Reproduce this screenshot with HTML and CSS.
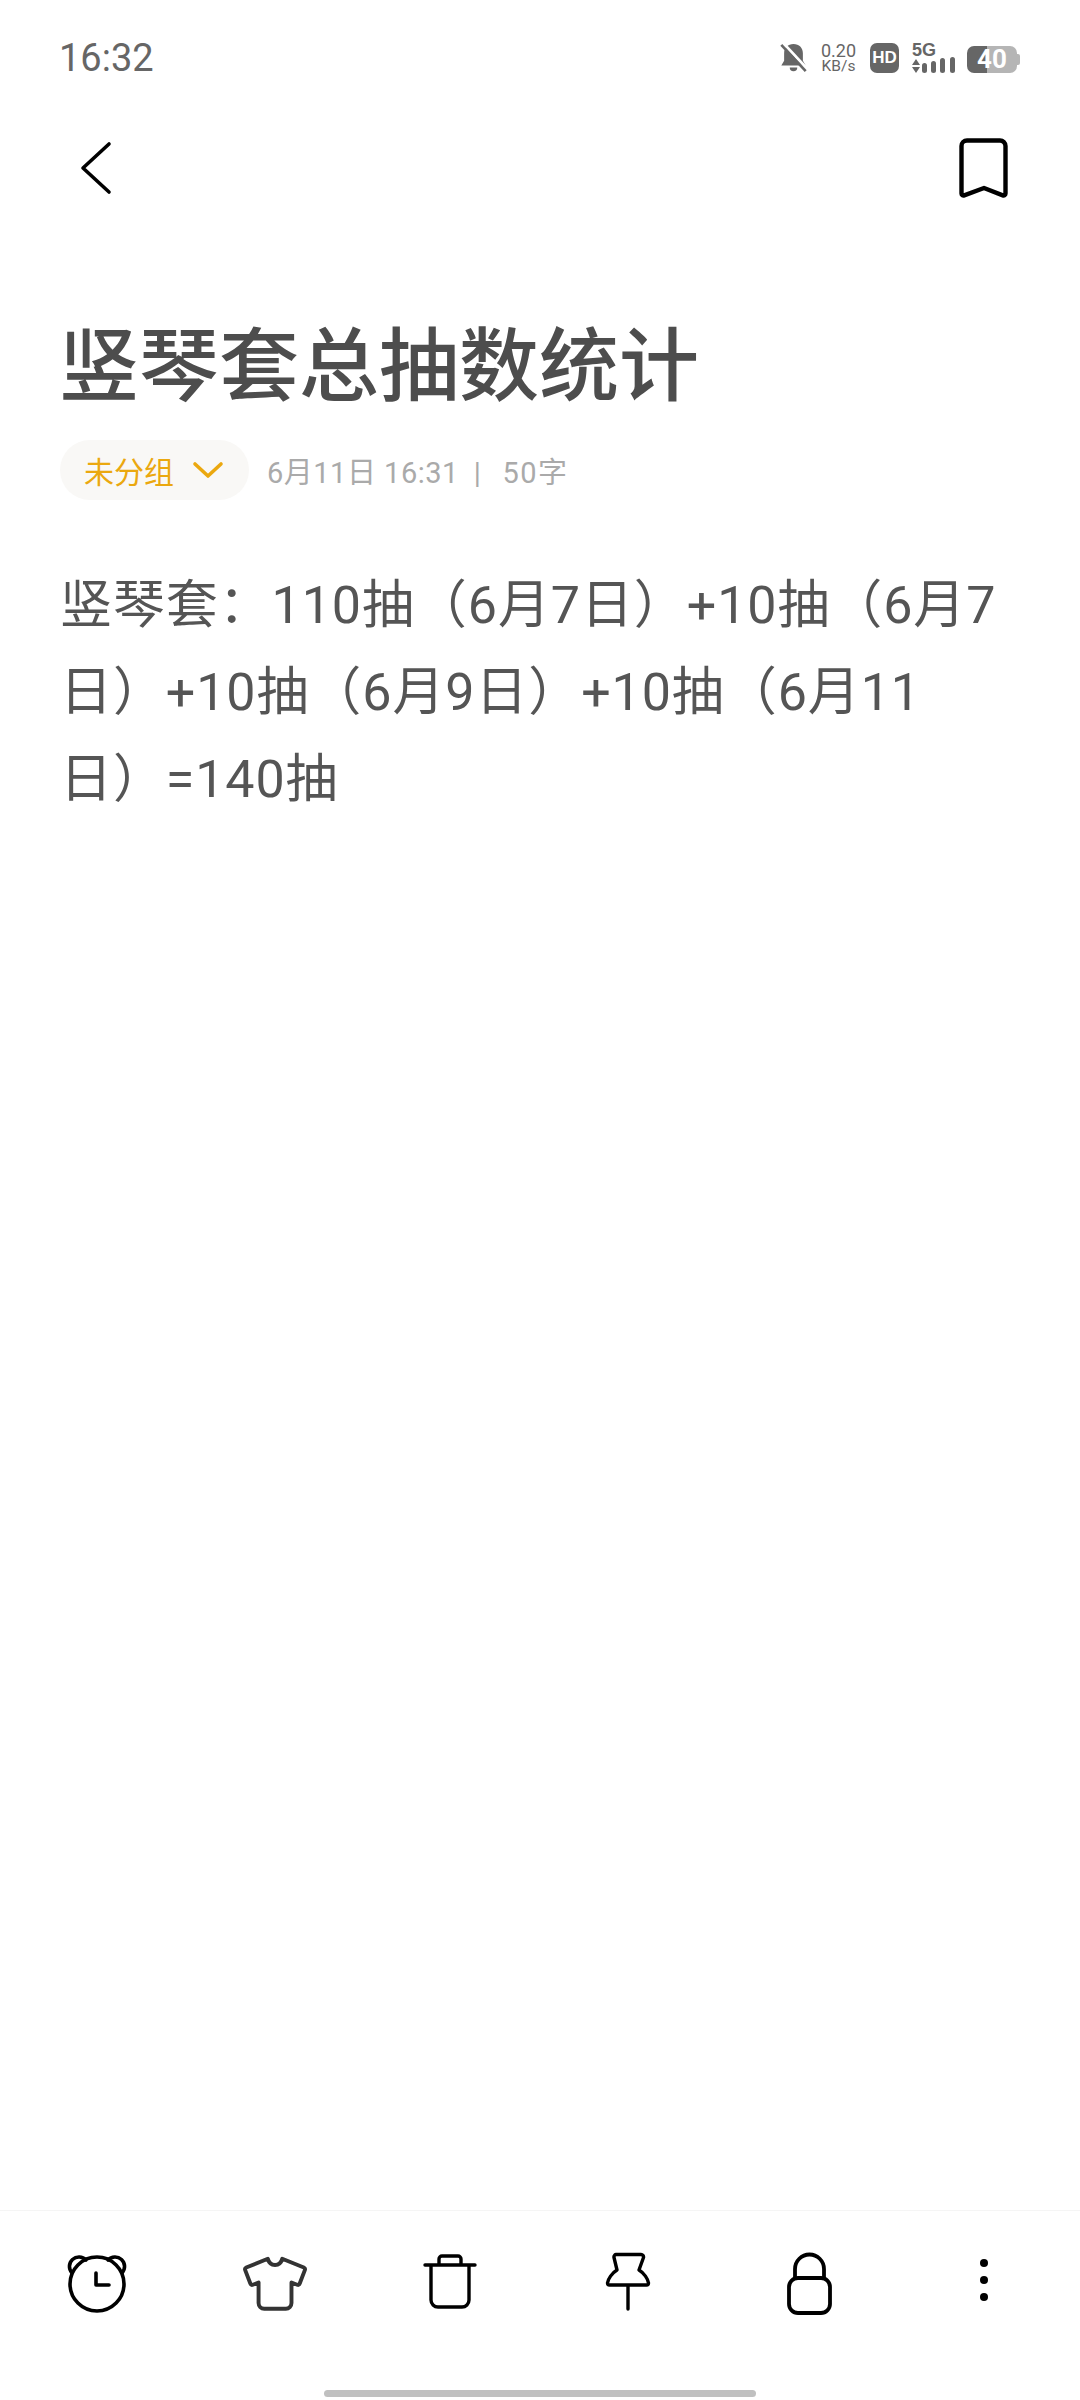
FILE: index.html
```html
<!DOCTYPE html>
<html lang="zh">
<head>
<meta charset="utf-8">
<title>竖琴套总抽数统计</title>
<link rel="stylesheet" href="styles.css">
</head>
<body>
<div class="screen">
  <header class="status">
    <span class="time">16:32</span>
    <div class="status-icons">
      <svg class="i-bell" viewBox="0 0 28 32"><path d="M14 1c-6 0-10 4-10 10v8l-3 5h26l-3-5v-8c0-6-4-10-10-10z" fill="#666"/><path d="M10 26a4 4 0 0 0 8 0z" fill="#666"/><path d="M3 0l26 28" stroke="#fff" stroke-width="3"/><path d="M1 2l26 28" stroke="#666" stroke-width="2.8"/></svg>
      <div class="speed"><span class="speed-num">0.20</span><span class="speed-unit">KB/s</span></div>
      <span class="hd">HD</span>
      <div class="net">
        <span class="fiveg">5G</span>
        <svg class="bars" viewBox="0 0 43 16"><path d="M0 8l4-6 4 6zM0 10h8l-4 6z" fill="#666"/><rect x="10" y="6" width="5" height="10" rx="2.500" fill="#666"/><rect x="19" y="4" width="5" height="12" rx="2.500" fill="#666"/><rect x="28" y="1" width="5" height="15" rx="2.500" fill="#666"/><rect x="38" y="0" width="5" height="16" rx="2.500" fill="#666"/></svg>
      </div>
      <div class="batt"><div class="batt-body"><span class="batt-num">40</span></div><span class="batt-nub"></span></div>
    </div>
  </header>

  <nav class="topbar">
    <svg class="i-back" viewBox="0 0 40 60"><path d="M31 6L5 30l26 24" fill="none" stroke="#000" stroke-width="3.600" stroke-linecap="round" stroke-linejoin="round"/></svg>
    <svg class="i-mark" viewBox="0 0 60 64"><path d="M13 4.500h33a5.500 5.500 0 0 1 5.500 5.500v47.500a2 2 0 0 1-2.700 1.900L30 52 10.200 59.400a2 2 0 0 1-2.700-1.900V10a5.500 5.500 0 0 1 5.500-5.500z" fill="none" stroke="#000" stroke-width="4.400" stroke-linejoin="round"/></svg>
  </nav>

  <main class="note">
    <h1 class="title">竖琴套总抽数统计</h1>
    <div class="meta">
      <div class="group"><span>未分组</span>
        <svg class="i-chev" viewBox="0 0 32 20"><path d="M3 4l13 12L29 4" fill="none" stroke="#eba80f" stroke-width="3.600" stroke-linecap="round" stroke-linejoin="round"/></svg>
      </div>
      <span class="info">6月11日 16:31<span class="sep">|</span><span class="count">50字</span></span>
    </div>
    <p class="content">竖琴套&#xFF1A;110抽&#xFF08;6月7日&#xFF09;+10抽&#xFF08;6月7日&#xFF09;+10抽&#xFF08;6月9日&#xFF09;+10抽&#xFF08;6月11日&#xFF09;=140抽</p>
  </main>

  <footer class="toolbar">
    <svg class="tool" viewBox="0 0 72 72"><g fill="none" stroke="#000" stroke-width="3.600" stroke-linecap="round" stroke-linejoin="round"><circle cx="36" cy="36" r="27"/><path d="M11 25A9.500 9.500 0 0 1 25 12M61 25A9.500 9.500 0 0 0 47 12M35 25v12h13"/></g></svg>
    <svg class="tool" viewBox="0 1.500 70 70"><path d="M29 12l-21 8.500a2 2 0 0 0-1 2.500l5 13a2 2 0 0 0 2.500 1.200L20 35v20a5.500 5.500 0 0 0 5.500 5.500h21A5.500 5.500 0 0 0 52 55V35l5.500 2.200a2 2 0 0 0 2.500-1.200l5-13a2 2 0 0 0-1-2.500L43 12c-1 4-3.500 6-7 6s-6-2-7-6z" fill="none" stroke="#333" stroke-width="3.800" stroke-linejoin="round"/></svg>
    <svg class="tool" viewBox="2 0 72 72"><g fill="none" stroke="#000" stroke-width="3.400" stroke-linecap="round" stroke-linejoin="round"><path d="M11 17h50M25 17V11a3 3 0 0 1 3-3h16a3 3 0 0 1 3 3v6M17 17v35a7 7 0 0 0 7 7h24a7 7 0 0 0 7-7V17"/></g></svg>
    <svg class="tool" viewBox="1 0 72 72"><path d="M24 6.500h25a2.500 2.500 0 0 1 2.500 3L47 22c5 3 9 9 9.500 13a2 2 0 0 1-2 2h-37a2 2 0 0 1-2-2c.5-4 4.500-10 9.500-13L22 9.500a2.500 2.500 0 0 1 2-3zM36 37v24" fill="none" stroke="#000" stroke-width="3.400" stroke-linecap="round" stroke-linejoin="round"/></svg>
    <svg class="tool" viewBox="-2 0 72 72"><g fill="none" stroke="#000" stroke-width="3.800" stroke-linecap="round" stroke-linejoin="round"><rect x="16" y="30" width="41" height="35" rx="9"/><path d="M22 30V21a14.500 14.500 0 0 1 29 0v9"/></g></svg>
    <svg class="tool" viewBox="0 0 72 72"><circle cx="36" cy="15" r="4"/><circle cx="36" cy="32" r="4"/><circle cx="36" cy="49" r="4"/></svg>
  </footer>
  <div class="home"><span class="home-bar"></span></div>
</div>
</body>
</html>
```

FILE: styles.css
```css
* { box-sizing: border-box; }
html, body { margin: 0; padding: 0; background: #fff; }
body { font-family: Roboto, "Noto Sans CJK SC", sans-serif; }
.screen { width: 1080px; height: 2400px; display: flex; flex-direction: column; }

.status { height: 116px; padding: 36px 60px 0 59px; display: flex; justify-content: space-between; align-items: flex-start; }
.time { font-family: Roboto, sans-serif; font-size: 38px; line-height: 44px; color: #666; }
.status-icons { display: flex; align-items: center; gap: 13px; height: 44px; }
.i-bell { width: 27px; height: 30px; }
.speed { display: flex; flex-direction: column; align-items: center; color: #666; width: 37px; }
.speed-num { font-size: 18px; line-height: 17px; }
.speed-unit { font-size: 15.500px; line-height: 15px; }
.hd { width: 29px; height: 30px; border-radius: 7px; background: #666; color: #fff; font: 700 17px/30px "Liberation Sans", sans-serif; text-align: center; }
.net { display: flex; flex-direction: column; width: 43px; height: 30px; margin-right: -1px; }
.fiveg { font: 700 18px/14px "Liberation Sans", sans-serif; color: #666; }
.bars { width: 43px; height: 16px; }
.batt { display: flex; align-items: center; margin-top: 3px; }
.batt-body { width: 50px; height: 27px; border-radius: 7px; background: linear-gradient(90deg, #666 20px, #b5b5b5 20px); display: flex; justify-content: center; align-items: center; }
.batt-num { color: #fff; font-size: 26px; font-weight: 700; line-height: 27px; }
.batt-nub { width: 3px; height: 11px; border-radius: 0 2px 2px 0; background: #b5b5b5; }

.topbar { height: 116px; padding: 0 66px 0 78px; display: flex; justify-content: space-between; align-items: center; margin-top: -6px; }
.i-back { width: 40px; height: 60px; }
.i-mark { width: 60px; height: 64px; }

.note { flex: 1; padding: 87px 60px 0 60px; }
.title { margin: 0 0 0 -1px; font-size: 80px; line-height: 92px; font-weight: 500; color: #4d4d4d; font-family: "Noto Sans CJK SC", sans-serif; }
.meta { display: flex; align-items: center; margin-top: 35px; height: 60px; }
.group { display: flex; align-items: center; height: 60px; width: 189px; padding-left: 24px; gap: 18px; border-radius: 30px; background: #f9f8f6; color: #eba80f; font-size: 30px; }
.i-chev { width: 32px; height: 20px; }
.info { margin-left: 18px; font-size: 29px; color: #aaa; letter-spacing: 0.5px; }
.sep { margin: 0 21px 0 15px; }
.count { letter-spacing: 1.500px; }
.content { margin: 62px 0 0 0; font-size: 52px; line-height: 87px; letter-spacing: 0.9px; color: #555; text-spacing-trim: space-all; }

.toolbar { height: 190px; padding: 37px 60px 0 61px; display: flex; justify-content: space-between; align-items: flex-start; border-top: 1px solid #f5f5f5; }
.tool { width: 72px; height: 72px; }
.home { height: 0; position: relative; display: flex; justify-content: center; }
.home-bar { position: absolute; top: -10px; width: 432px; height: 7px; border-radius: 4px; background: #c0c0c0; }
```
